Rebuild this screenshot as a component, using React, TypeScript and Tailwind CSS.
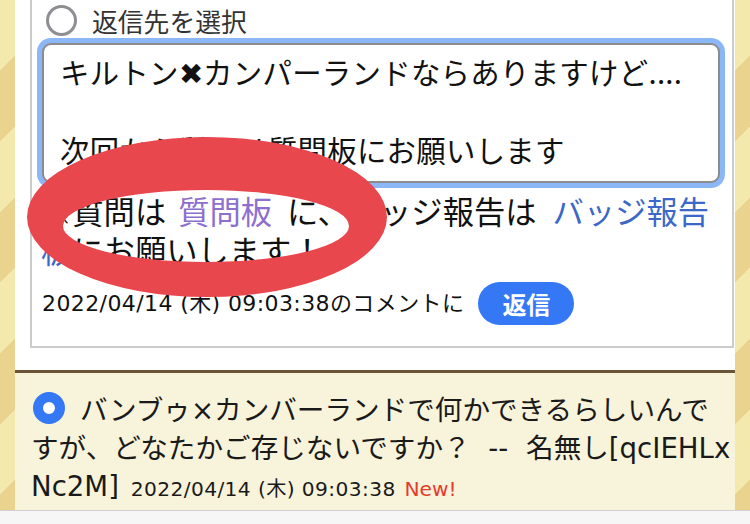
const jp = "font-['Noto_Sans_CJK_JP',sans-serif]";
const mix = "font-['DejaVu_Sans','Noto_Sans_CJK_JP',sans-serif]";

function Stripe() {
  return (
    <div className="w-[15px] shrink-0 bg-[image:repeating-linear-gradient(135deg,#f3e9ad_0px,#f3e9ad_50px,#ead38f_50px,#ead38f_100px)]" />
  );
}

function ReplyForm() {
  return (
    <section className="ml-[15px] mr-[1px] border-x-2 border-b-2 border-[#cccccc] pb-[21px]">
      <label className="flex items-center gap-[15px] pl-[14px] pt-[5px]">
        <span className="h-[31px] w-[31px] shrink-0 rounded-full border-[3px] border-[#8e8e93] bg-white" />
        <span className={`${jp} text-[25.8px] leading-[31px] text-[#333]`}>返信先を選択</span>
      </label>

      <textarea
        readOnly
        value={'キルトン✖カンパーランドならありますけど....\n\n次回から質問は質問板にお願いします'}
        className={`${jp} ml-[10px] mt-[7px] block h-[140px] w-[678px] resize-none overflow-hidden rounded-[9px] border-2 border-[#8c8c8c] bg-white pl-[16px] pt-[7px] text-[29.4px] leading-[39px] tracking-[0.3px] text-[#111] outline-none ring-[5px] ring-[#8cb7f7]`}
      />

      <p className={`${jp} ml-[9px] mt-[7.5px] text-[31.3px] leading-[39px] text-[#111]`}>
        ※質問は<a className="ml-[12px] mr-[15px] text-[#8d6fce]">質問板</a>に、バッジ報告は
        <a className="ml-[16px] text-[#3a67c8]">バッジ報告板</a>にお願いします！
      </p>

      <div className="ml-[10px] mt-[13.5px] flex items-center">
        <span className={`${mix} text-[22px] tracking-[0.4px] text-[#111]`}>2022/04/14 (木) 09:03:38のコメントに</span>
        <button className={`${jp} ml-[14px] h-[43px] w-[96px] rounded-full bg-[#3478f6] text-[24px] font-bold text-white`}>
          返信
        </button>
      </div>
    </section>
  );
}

function Comment() {
  return (
    <div className="h-[137px] bg-[#f8f4db] pl-[16px] pr-[1px] pt-[19px]">
      <p className={`${mix} break-all text-[27.6px] leading-[38px] text-[#1a1a1a]`}>
        <span className="ml-[2px] mr-[15px] inline-block h-[32px] w-[32px] rounded-full border-[10px] border-[#3478f6] bg-white align-top" />
        バンブゥ×カンバーランドで何かできるらしいんですが、どなたかご存じないですか？ <span className="mx-[9px]">--</span> 名無し[qcIEHLxNc2M]{' '}
        <span className="ml-[3px] text-[20.2px] tracking-[0.4px]">2022/04/14 (木) 09:03:38</span>{' '}
        <span className="text-[20.2px] text-[#e53b2c]">New!</span>
      </p>
    </div>
  );
}

function Ring() {
  return (
    <svg className="pointer-events-none absolute left-0 top-0" width="750" height="524" viewBox="0 0 750 524">
      <path
        fillRule="evenodd"
        fill="#e8474d"
        d="M27 217a180 80 0 1 0 360 0a180 80 0 1 0 -360 0Z M63 226a143 36 0 1 0 286 0a143 36 0 1 0 -286 0Z"
      />
    </svg>
  );
}

export default function App() {
  return (
    <div className="relative flex h-[524px] w-[750px] flex-col overflow-hidden bg-white">
      <div className="flex h-[510px]">
        <Stripe />
        <main className="flex w-[720px] flex-col bg-white">
          <ReplyForm />
          <div className="mt-[22px] h-[3px] bg-[#6b5438]" />
          <Comment />
        </main>
        <Stripe />
      </div>
      <div className="h-[14px] border-t border-[#d0d0d0] bg-[#f6f6f6]" />
      <Ring />
    </div>
  );
}
